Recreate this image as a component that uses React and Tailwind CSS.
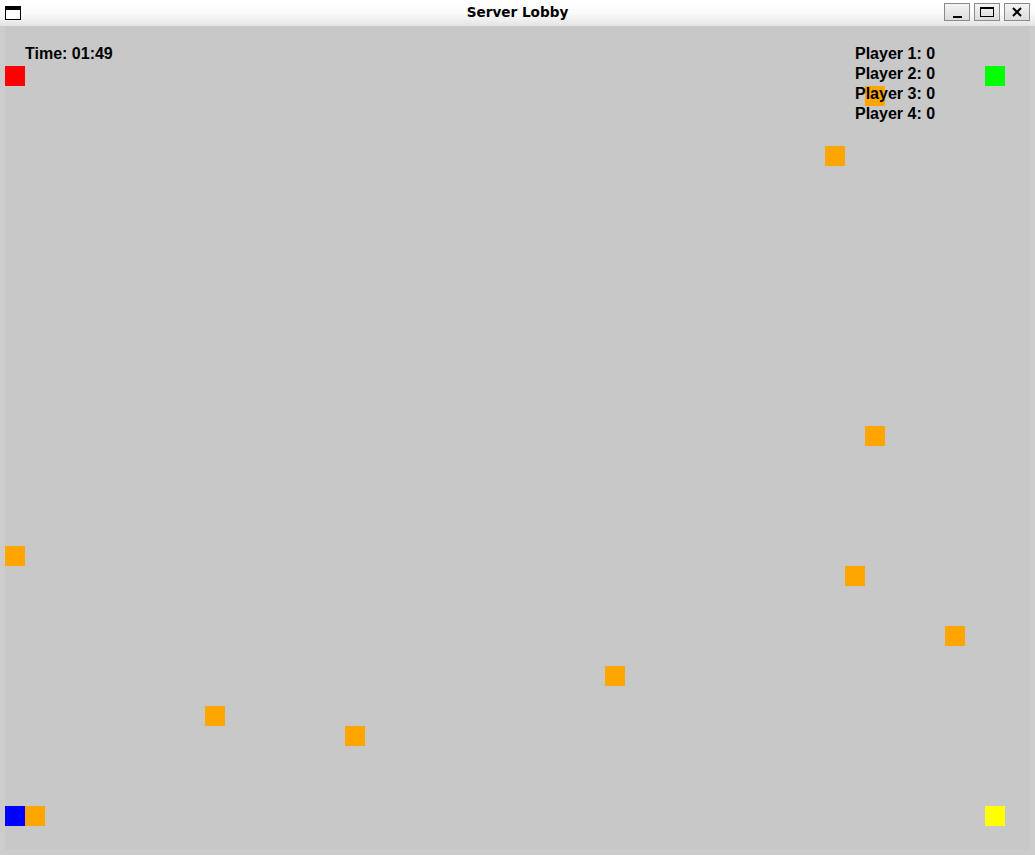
import React from "react";

const squares = [
  { x: 0, y: 40, c: "bg-[#ff0000]" },
  { x: 980, y: 40, c: "bg-[#00ff00]" },
  { x: 0, y: 780, c: "bg-[#0000ff]" },
  { x: 980, y: 780, c: "bg-[#ffff00]" },
  { x: 860, y: 60, c: "bg-[#ffa500]" },
  { x: 820, y: 120, c: "bg-[#ffa500]" },
  { x: 860, y: 400, c: "bg-[#ffa500]" },
  { x: 0, y: 520, c: "bg-[#ffa500]" },
  { x: 840, y: 540, c: "bg-[#ffa500]" },
  { x: 940, y: 600, c: "bg-[#ffa500]" },
  { x: 600, y: 640, c: "bg-[#ffa500]" },
  { x: 200, y: 680, c: "bg-[#ffa500]" },
  { x: 340, y: 700, c: "bg-[#ffa500]" },
  { x: 20, y: 780, c: "bg-[#ffa500]" },
];

function WinButton({ children }) {
  return (
    <div className="w-[26px] h-[18px] border border-[#8a8a8a] bg-gradient-to-b from-[#f4f4f4] to-[#dcdcdc] flex items-center justify-center">
      {children}
    </div>
  );
}

export default function App() {
  return (
    <div className="w-[1035px] h-[855px] flex flex-col bg-[#cccccc] overflow-hidden">
      <div className="h-[26px] shrink-0 grid grid-cols-[1fr_auto_1fr] items-center bg-gradient-to-b from-[#ffffff] via-[#fbfbfb] to-[#e4e4e4]">
        <div className="flex">
          <div className="ml-[5px] w-[16px] h-[14px] border border-black border-t-[4px] bg-white" />
        </div>
        <div className="text-center text-[13.6px] font-bold text-black leading-none" style={{ fontFamily: '"DejaVu Sans", sans-serif' }}>
          Server Lobby
        </div>
        <div className="flex justify-end gap-[4px] mr-[5px] -mt-[2px]">
          <WinButton>
            <div className="w-[9px] h-[2px] bg-black mt-[9px]" />
          </WinButton>
          <WinButton>
            <div className="w-[14px] h-[10px] border border-black border-t-[2px]" />
          </WinButton>
          <WinButton>
            <svg width="10" height="10" viewBox="0 0 10 10">
              <path d="M1 1L9 9M9 1L1 9" stroke="black" strokeWidth="2" />
            </svg>
          </WinButton>
        </div>
      </div>
      <div className="flex-1 flex px-[5px] pb-[5px]">
        <div className="flex-1 relative bg-[#c8c8c8]">
          {squares.map((s, i) => (
            <div
              key={i}
              className={`absolute w-[20px] h-[20px] ${s.c}`}
              style={{ left: s.x, top: s.y }}
            />
          ))}
          <div
            className="absolute left-[20px] top-[18px] text-[16px] leading-[20px] font-bold text-black"
            style={{ fontFamily: '"Liberation Sans", Arial, sans-serif' }}
          >
            Time: 01:49
          </div>
          <div
            className="absolute left-[850px] top-[18px] text-[16px] leading-[20px] font-bold text-black flex flex-col"
            style={{ fontFamily: '"Liberation Sans", Arial, sans-serif' }}
          >
            <span>Player 1: 0</span>
            <span>Player 2: 0</span>
            <span>Player 3: 0</span>
            <span>Player 4: 0</span>
          </div>
        </div>
      </div>
    </div>
  );
}
